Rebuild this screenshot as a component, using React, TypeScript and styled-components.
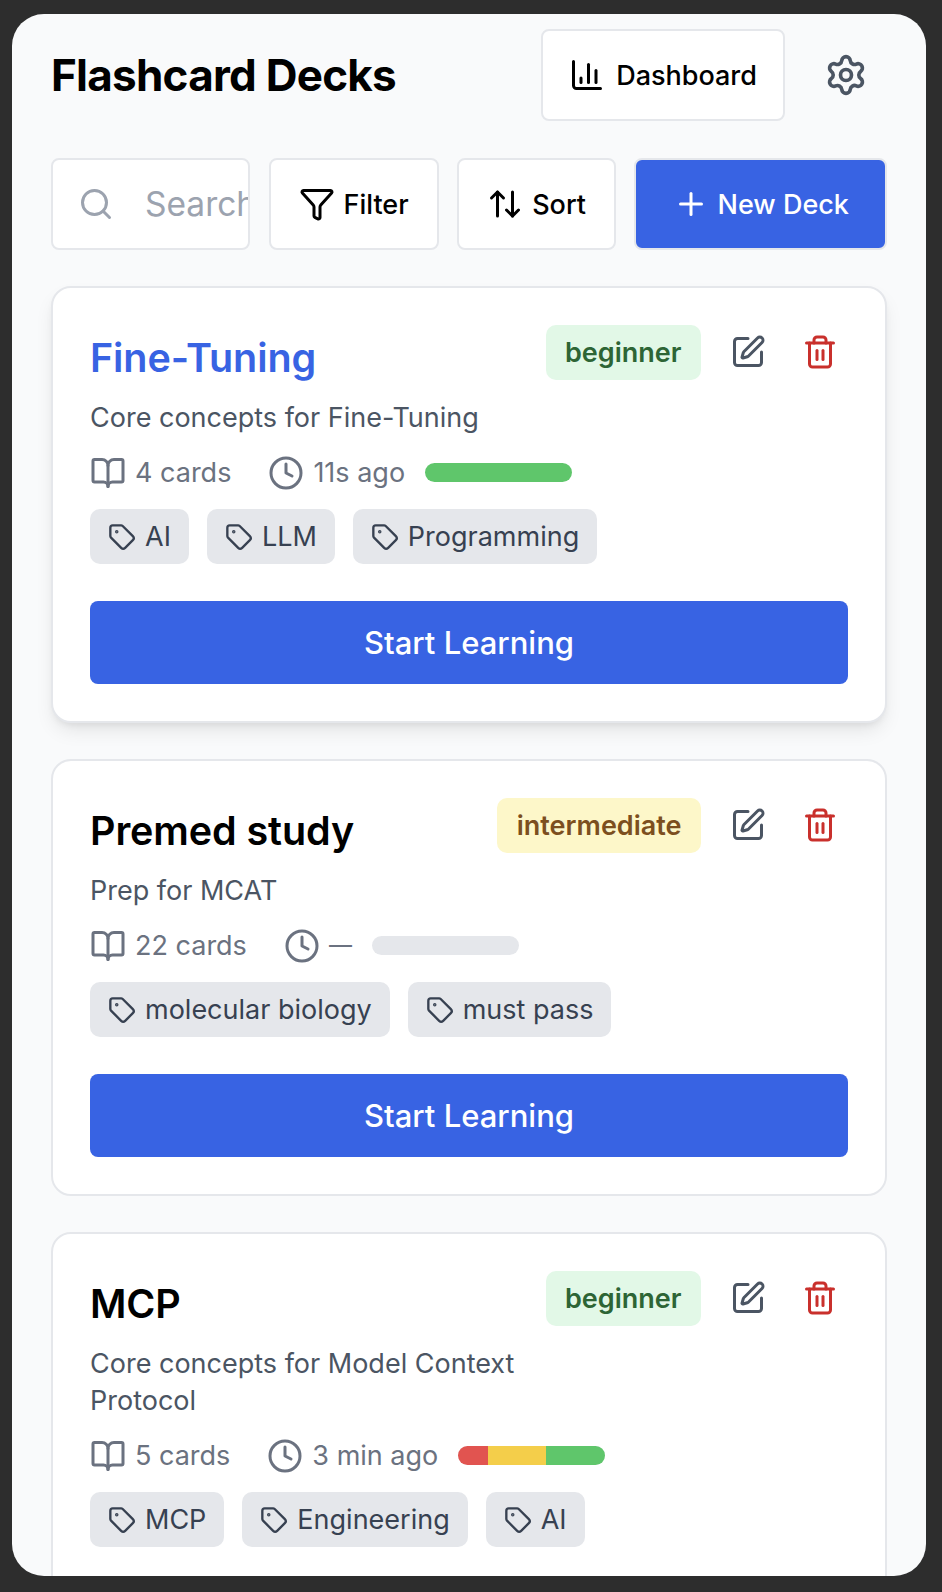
import { createGlobalStyle, styled } from "styled-components";
import {
  ArrowUpDown,
  BookOpen,
  ChartColumn,
  Clock,
  Funnel,
  Plus,
  Search,
  Settings,
  SquarePen,
  Tag,
  Trash2,
} from "lucide-react";

const Global = createGlobalStyle`
  html, body {
    margin: 0;
    height: 1592px;
    overflow: hidden;
    background: #2d2d2d;
    font-family: Inter, "Liberation Sans", sans-serif;
  }
  * { box-sizing: border-box; }
`;

const Frame = styled.div`
  margin: 14px 16px 0 12px;
  height: 1562px;
  padding: 15px 39px 0 39px;
  overflow: hidden;
  background: #f9fafb;
  border-radius: 32px;
`;
const Header = styled.header`
  display: flex;
  align-items: center;
  justify-content: space-between;
`;
const Title = styled.h1`
  margin: 0;
  font-size: 44px;
  font-weight: 700;
  line-height: 92px;
  letter-spacing: -0.75px;
  color: #000;
`;
const HeaderActions = styled.div`
  display: flex;
  align-items: center;
  gap: 20px;
`;
const Button = styled.button<{ $primary?: boolean }>`
  display: flex;
  align-items: center;
  justify-content: center;
  gap: 9px;
  height: 92px;
  padding: 0 28px;
  font: 450 27px Inter, "Liberation Sans", sans-serif;
  color: ${(p) => (p.$primary ? "#fff" : "#000")};
  background: ${(p) => (p.$primary ? "#3863e3" : "#fff")};
  border: 2px solid #e5e7eb;
  border-radius: 8px;
`;
const DashboardButton = styled(Button)`
  gap: 11px;
  padding: 0 26px;
`;
const NewDeckButton = styled(Button)`
  flex: 1;
`;
const GearButton = styled.button`
  display: flex;
  padding: 19px;
  color: #4b5563;
  background: none;
  border: 0;
`;
const Toolbar = styled.div`
  display: flex;
  gap: 18.5px;
  margin-top: 37px;
`;
const SearchBox = styled.div`
  display: flex;
  align-items: center;
  gap: 31px;
  width: 199px;
  height: 92px;
  padding: 0 0 0 25px;
  overflow: hidden;
  background: #fff;
  border: 2px solid #e5e7eb;
  border-radius: 8px;
  color: #9ca3af;
  svg { flex: none; }
`;
const SearchInput = styled.input`
  width: 100%;
  min-width: 0;
  padding: 0;
  font: 400 33.5px Inter, "Liberation Sans", sans-serif;
  border: 0;
  outline: none;
  background: none;
  &::placeholder { color: #9ca3af; opacity: 1; }
`;
const DeckList = styled.div`
  display: flex;
  flex-direction: column;
  gap: 36px;
  margin-top: 36px;
`;
const Card = styled.article<{ $active?: boolean }>`
  padding: 37px;
  background: #fff;
  border: 2px solid #e5e7eb;
  border-radius: 20px;
  box-shadow: ${(p) => (p.$active ? "0 10px 20px -4px rgba(0,0,0,.1), 0 4px 8px -4px rgba(0,0,0,.1)" : "none")};
`;
const CardTop = styled.div`
  display: flex;
  justify-content: space-between;
  gap: 24px;
`;
const CardInfo = styled.div`
  flex: 1;
  min-width: 0;
`;
const CardName = styled.h2<{ $active?: boolean }>`
  margin: 7px 0 0;
  font-size: 39.5px;
  font-weight: 600;
  line-height: 52px;
  letter-spacing: -0.1px;
  color: ${(p) => (p.$active ? "#3863e3" : "#000")};
`;
const Description = styled.p`
  margin: 15px 0 0;
  font-size: 27px;
  line-height: 37px;
  color: #4b5563;
`;
const CardControls = styled.div`
  display: flex;
  align-items: flex-start;
  flex: none;
  padding-right: 10px;
`;
const Level = styled.span<{ $tone: "green" | "yellow" }>`
  height: 55px;
  padding: 0 19.5px;
  font-size: 27px;
  font-weight: 600;
  line-height: 55px;
  color: ${(p) => (p.$tone === "green" ? "#2d6535" : "#7c4f1e")};
  background: ${(p) => (p.$tone === "green" ? "#e2f8e7" : "#fdf7c9")};
  border-radius: 10px;
`;
const IconButton = styled.button<{ $danger?: boolean }>`
  display: flex;
  margin-left: ${(p) => (p.$danger ? "36px" : "29px")};
  margin-top: 9px;
  padding: 0;
  color: ${(p) => (p.$danger ? "#c9302c" : "#4b5563")};
  background: none;
  border: 0;
`;
const Meta = styled.div`
  display: flex;
  align-items: center;
  gap: 37px;
  margin-top: 18px;
  font-size: 27px;
  line-height: 37px;
  color: #6b7280;
`;
const MetaItem = styled.span`
  display: flex;
  align-items: center;
  gap: 9px;
`;
const NoDate = styled.span`
  font-size: 23px;
`;
const Progress = styled.div`
  display: flex;
  width: 147px;
  height: 19px;
  margin-left: -17px;
  overflow: hidden;
  background: #e5e7eb;
  border-radius: 10px;
`;
const Segment = styled.div<{ $color: string }>`
  background: ${(p) => p.$color};
`;
const Tags = styled.div`
  display: flex;
  gap: 18px;
  margin-top: 18px;
`;
const Chip = styled.span`
  display: flex;
  align-items: center;
  gap: 9px;
  height: 55px;
  padding: 0 18px;
  font-size: 27px;
  color: #374151;
  background: #e5e7eb;
  border-radius: 10px;
`;
const StartButton = styled.button`
  display: block;
  width: 100%;
  height: 83px;
  margin-top: 37px;
  font: 500 31px Inter, "Liberation Sans", sans-serif;
  color: #fff;
  background: #3863e3;
  border: 0;
  border-radius: 8px;
`;

type Deck = {
  name: string;
  description: string;
  level: "beginner" | "intermediate";
  cards: string;
  seen?: string;
  mastery: { color: string; share: number }[];
  tags: string[];
  active?: boolean;
};

const GREEN = "#5fc66b";
const YELLOW = "#f4ce4a";
const RED = "#e15450";

const decks: Deck[] = [
  {
    name: "Fine-Tuning",
    description: "Core concepts for Fine-Tuning",
    level: "beginner",
    cards: "4 cards",
    seen: "11s ago",
    mastery: [{ color: GREEN, share: 100 }],
    tags: ["AI", "LLM", "Programming"],
    active: true,
  },
  {
    name: "Premed study",
    description: "Prep for MCAT",
    level: "intermediate",
    cards: "22 cards",
    mastery: [],
    tags: ["molecular biology", "must pass"],
  },
  {
    name: "MCP",
    description: "Core concepts for Model Context Protocol",
    level: "beginner",
    cards: "5 cards",
    seen: "3 min ago",
    mastery: [
      { color: RED, share: 20 },
      { color: YELLOW, share: 40 },
      { color: GREEN, share: 40 },
    ],
    tags: ["MCP", "Engineering", "AI"],
  },
];

function DeckCard({ deck }: { deck: Deck }) {
  return (
    <Card $active={deck.active}>
      <CardTop>
        <CardInfo>
          <CardName $active={deck.active}>{deck.name}</CardName>
          <Description>{deck.description}</Description>
        </CardInfo>
        <CardControls>
          <Level $tone={deck.level === "beginner" ? "green" : "yellow"}>{deck.level}</Level>
          <IconButton aria-label="Edit">
            <SquarePen size={36} strokeWidth={2} />
          </IconButton>
          <IconButton $danger aria-label="Delete">
            <Trash2 size={36} strokeWidth={2} />
          </IconButton>
        </CardControls>
      </CardTop>
      <Meta>
        <MetaItem>
          <BookOpen size={36} strokeWidth={2} />
          {deck.cards}
        </MetaItem>
        <MetaItem>
          <Clock size={36} strokeWidth={2} />
          {deck.seen ?? <NoDate>—</NoDate>}
        </MetaItem>
        <Progress>
          {deck.mastery.map((m) => (
            <Segment key={m.color} $color={m.color} style={{ width: `${m.share}%` }} />
          ))}
        </Progress>
      </Meta>
      <Tags>
        {deck.tags.map((t) => (
          <Chip key={t}>
            <Tag size={28} strokeWidth={2} />
            {t}
          </Chip>
        ))}
      </Tags>
      <StartButton>Start Learning</StartButton>
    </Card>
  );
}

export default function App() {
  return (
    <>
      <Global />
      <Frame>
        <Header>
          <Title>Flashcard Decks</Title>
          <HeaderActions>
            <DashboardButton>
              <ChartColumn size={36} strokeWidth={2} />
              Dashboard
            </DashboardButton>
            <GearButton aria-label="Settings">
              <Settings size={44} strokeWidth={2} />
            </GearButton>
          </HeaderActions>
        </Header>
        <Toolbar>
          <SearchBox>
            <Search size={36} strokeWidth={2} />
            <SearchInput placeholder="Search decks..." />
          </SearchBox>
          <Button>
            <Funnel size={36} strokeWidth={2} />
            Filter
          </Button>
          <Button>
            <ArrowUpDown size={36} strokeWidth={2} />
            Sort
          </Button>
          <NewDeckButton $primary>
            <Plus size={36} strokeWidth={2} />
            New Deck
          </NewDeckButton>
        </Toolbar>
        <DeckList>
          {decks.map((d) => (
            <DeckCard key={d.name} deck={d} />
          ))}
        </DeckList>
      </Frame>
    </>
  );
}
